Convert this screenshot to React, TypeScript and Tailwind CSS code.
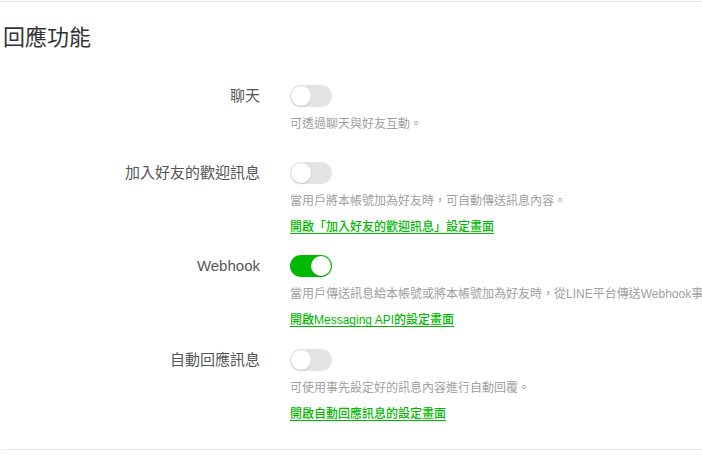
import React from "react";

interface Feature {
  label: string;
  on: boolean;
  desc: string;
  link?: string;
  gap: string;
}

const FEATURES: Feature[] = [
  { label: "聊天", on: false, desc: "可透過聊天與好友互動。", gap: "mb-[29px]" },
  {
    label: "加入好友的歡迎訊息",
    on: false,
    desc: "當用戶將本帳號加為好友時，可自動傳送訊息內容。",
    link: "開啟「加入好友的歡迎訊息」設定畫面",
    gap: "mb-[19px]",
  },
  {
    label: "Webhook",
    on: true,
    desc: "當用戶傳送訊息給本帳號或將本帳號加為好友時，從LINE平台傳送Webhook事件至Bot伺服器。",
    link: "開啟Messaging API的設定畫面",
    gap: "mb-[20px]",
  },
  {
    label: "自動回應訊息",
    on: false,
    desc: "可使用事先設定好的訊息內容進行自動回覆。",
    link: "開啟自動回應訊息的設定畫面",
    gap: "mb-[26px]",
  },
];

function Toggle({ on }: { on: boolean }) {
  return (
    <div
      className={
        "relative w-[42px] h-[22px] rounded-full shrink-0 " +
        (on ? "bg-[#00b900]" : "bg-[#e3e4e6]")
      }
    >
      <div
        className={
          "absolute top-[1px] w-[20px] h-[20px] rounded-full bg-white shadow-[0_1px_2px_rgba(0,0,0,0.15)] " +
          (on ? "left-[21px]" : "left-[1px]")
        }
      />
    </div>
  );
}

export default function App() {
  return (
    <div
      className="w-[702px] h-[455px] overflow-hidden bg-white"
      style={{ fontFamily: '"Liberation Sans", "Noto Sans CJK TC", sans-serif' }}
    >
      <div className="mt-[1px] h-px bg-[#e8e8e8]" />

      {/* Title */}
      <h1 className="mt-[20px] ml-[3px] text-[22px] leading-[32px] text-[#333]">回應功能</h1>

      <div className="mt-[31px]">
        {FEATURES.map((f) => (
          <div key={f.label} className={"flex " + f.gap}>
            <div className="w-[260px] shrink-0 text-right text-[15px] leading-[22px] text-[#555]">
              {f.label}
            </div>
            <div className="ml-[30px] flex flex-col items-start">
              <Toggle on={f.on} />
              <p className="mt-[8px] text-[12px] leading-[18px] text-[#a0a0a0] whitespace-nowrap">
                {f.desc}
              </p>
              {f.link && (
                <a
                  href="#"
                  className="mt-[8px] text-[12px] leading-[18px] font-medium text-[#00b900] underline underline-offset-2 whitespace-nowrap"
                >
                  {f.link}
                </a>
              )}
            </div>
          </div>
        ))}
      </div>

      <div className="ml-[2px] h-px bg-[#e8e8e8]" />
    </div>
  );
}
